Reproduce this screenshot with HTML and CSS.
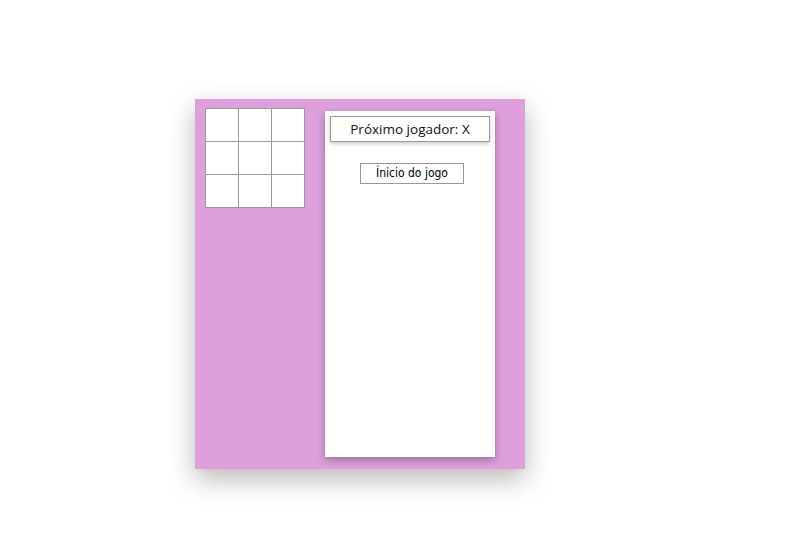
FILE: index.html
```html
<!DOCTYPE html>
<html lang="pt">
<head>
  <meta charset="UTF-8" />
  <meta name="viewport" content="width=device-width, initial-scale=1.0" />
  <title>Jogo da Velha</title>
  <link rel="stylesheet" href="styles.css">
</head>
<body>
  <div class="game">
    <div class="board">
      <div class="square"></div>
      <div class="square"></div>
      <div class="square"></div>
      <div class="square"></div>
      <div class="square"></div>
      <div class="square"></div>
      <div class="square"></div>
      <div class="square"></div>
      <div class="square"></div>
    </div>
    <div class="game-info">
      <div class="status">Próximo jogador: X</div>
      <ol class="moves">
        <li><button>Ínicio do jogo</button></li>
      </ol>
    </div>
  </div>
</body>
</html>
```

FILE: styles.css
```css
html, body { height: 100%; }
body {
  margin: 0;
  padding-top: 99px;
  box-sizing: border-box;
  background: #fff;
  font-family: "Open Sans", sans-serif;
}
.game {
  display: flex;
  align-items: flex-start;
  gap: 20px;
  width: 330px;
  height: 370px;
  box-sizing: border-box;
  margin-left: 195px;
  padding: 9px 30px 0 10px;
  background: plum;
  box-shadow: 0 10px 25px rgba(0, 0, 0, 0.28);
}
.board {
  display: grid;
  grid-template-columns: repeat(3, 32px);
  grid-auto-rows: 32px;
  gap: 1px;
  padding: 1px;
  background: #999;
}
.square { background: #fff; }
.game-info {
  width: 170px;
  height: 346px;
  margin-top: 3px;
  box-sizing: border-box;
  padding: 5px 5px 0 5px;
  background: #fff;
  box-shadow: 0 3px 8px rgba(0, 0, 0, 0.3);
}
.status {
  height: 26px;
  line-height: 24px;
  box-sizing: border-box;
  border: 1px solid #999;
  text-align: center;
  font-size: 13.5px;
  color: #111;
  box-shadow: 0 2px 4px rgba(0, 0, 0, 0.2);
}
.moves {
  list-style: none;
  margin: 21px 0 0 0;
  padding: 0 0 0 4px;
  text-align: center;
}
.moves li { line-height: 0; }
.moves button {
  width: 104px;
  height: 21px;
  padding: 0;
  background: #fff;
  border: 1px solid #999;
  font-family: "DejaVu Sans Condensed", sans-serif;
  font-size: 12px;
  line-height: 19px;
  color: #000;
}
```
